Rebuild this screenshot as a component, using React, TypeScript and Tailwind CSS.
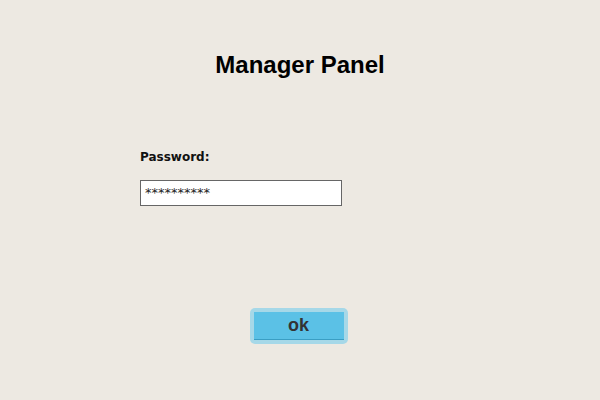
export default function App() {
  return (
    <div className="w-[600px] h-[400px] bg-[#ede9e2] flex flex-col items-center font-['Liberation_Sans',Arial,sans-serif]">
      <h1 className="mt-[51px] text-[24px] leading-[28px] font-bold text-black">Manager Panel</h1>
      <div className="w-[600px] pl-[140px] mt-[71px] flex flex-col">
        <label className="text-[12px] leading-[14px] font-bold text-[#111] font-['DejaVu_Sans',sans-serif]">Password:</label>
        <div className="mt-[16px] w-[202px] h-[26px] bg-white border-[1.5px] border-[#666] flex items-center pl-[4px] text-[13px] text-[#222] font-['DejaVu_Sans',sans-serif]">
          **********
        </div>
      </div>
      <div className="mt-[102px] ml-[-3px] w-[98px] h-[36px] rounded-[5px] bg-[#a6d8e8] p-[4px]">
        <div className="w-full h-full bg-[#5bc1e6] border-b border-[#3a9ec4] flex items-center justify-center text-[18px] font-bold text-[#333]">
          ok
        </div>
      </div>
    </div>
  );
}
